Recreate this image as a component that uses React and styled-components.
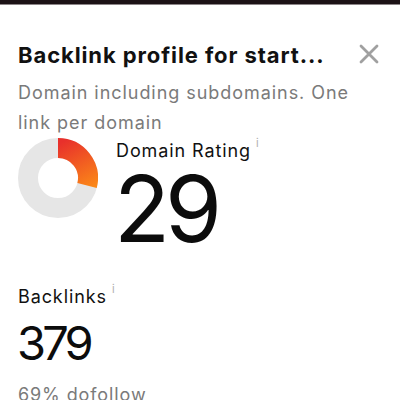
import { createGlobalStyle, styled } from 'styled-components';

const GlobalStyle = createGlobalStyle`
	html, body {
		margin: 0;
		padding: 0;
		background: #fff;
		font-family: Inter, 'Noto Sans', sans-serif;
		color: #111;
	}
`;

const Info = () => <InfoMark>i</InfoMark>;

const Donut = ({ value }) => {
	const r = 30;
	const a = (value / 100) * 2 * Math.PI;
	const ex = 40 + r * Math.sin(a);
	const ey = 40 - r * Math.cos(a);
	const large = value > 50 ? 1 : 0;
	return (
		<svg width='80' height='80' viewBox='0 0 80 80'>
			<defs>
				<linearGradient id='dr' gradientUnits='userSpaceOnUse' x1='44' y1='4' x2='70' y2='52'>
					<stop offset='0' stopColor='#e8302b' />
					<stop offset='1' stopColor='#fb8818' />
				</linearGradient>
			</defs>
			<circle cx='40' cy='40' r={r} fill='none' stroke='#e6e6e6' strokeWidth='20' />
			<path
				d={`M40 ${40 - r} A${r} ${r} 0 ${large} 1 ${ex} ${ey}`}
				fill='none'
				stroke='url(#dr)'
				strokeWidth='20'
			/>
		</svg>
	);
};

const App = () => {
	return (
		<>
			<GlobalStyle />
			<Page>
				<TopBar />
				<Panel>
					<Header>
						<Title>Backlink profile for start...</Title>
						<Close aria-label='close'>
							<svg width='20' height='20' viewBox='0 0 20 20'>
								<path d='M2 2 L18 18 M18 2 L2 18' stroke='#a0a0a0' strokeWidth='2.8' strokeLinecap='round' />
							</svg>
						</Close>
					</Header>
					<Subtitle>Domain including subdomains. One link per domain</Subtitle>
					<RatingRow>
						<Donut value={29} />
						<Metric>
							<Label>
								Domain Rating
								<Info />
							</Label>
							<BigNumber $size='big'>29</BigNumber>
						</Metric>
					</RatingRow>
					<Section>
						<Label>
							Backlinks
							<Info />
						</Label>
						<BigNumber>379</BigNumber>
						<Note>69% dofollow</Note>
					</Section>
				</Panel>
			</Page>
		</>
	);
};

const Page = styled.div`
	width: 400px;
	height: 400px;
	overflow: hidden;
	background: #fff;
`;

const TopBar = styled.div`
	height: 4px;
	background: #1c1216;
	border-bottom: 1px solid #8c8588;
`;

const Panel = styled.div`
	padding: 35px 18px 0 18px;
`;

const Header = styled.div`
	display: flex;
	align-items: center;
	justify-content: space-between;
`;

const Title = styled.h2`
	margin: 0;
	font-size: 22px;
	font-weight: 700;
	line-height: 30px;
	letter-spacing: 0.9px;
`;

const Close = styled.button`
	border: 0;
	background: none;
	padding: 0;
	margin: -2px 3px 0 0;
	display: flex;
`;

const Subtitle = styled.p`
	margin: 8px 0 0;
	font-size: 18px;
	line-height: 30px;
	color: #7a7a7a;
	letter-spacing: 0.95px;
	padding-right: 20px;
`;

const RatingRow = styled.div`
	display: flex;
	align-items: flex-start;
	gap: 18px;
`;

const Metric = styled.div`
	display: flex;
	flex-direction: column;
`;

const Label = styled.div`
	font-size: 18px;
	line-height: 26px;
	letter-spacing: 0.9px;
	color: #111;
`;

const InfoMark = styled.span`
	display: inline-block;
	font-size: 11px;
	line-height: 11px;
	color: #b0b0b0;
	margin-left: 5px;
	vertical-align: top;
	letter-spacing: 0;
`;

const BigNumber = styled.div`
	font-size: ${(p) => (p.$size === 'big' ? '92px' : '47px')};
	line-height: ${(p) => (p.$size === 'big' ? '90px' : '60px')};
	letter-spacing: ${(p) => (p.$size === 'big' ? '-5px' : '-3.8px')};
	margin: ${(p) => (p.$size === 'big' ? '0 0 0 -2px' : '3px 0 0 -1px')};
	font-weight: 400;
	color: #0c0c0c;
`;

const Section = styled.div`
	margin-top: 30px;
`;

const Note = styled.div`
	font-size: 18px;
	line-height: 26px;
	color: #7a7a7a;
	letter-spacing: 0.9px;
	margin-top: 9px;
`;

export default App;
